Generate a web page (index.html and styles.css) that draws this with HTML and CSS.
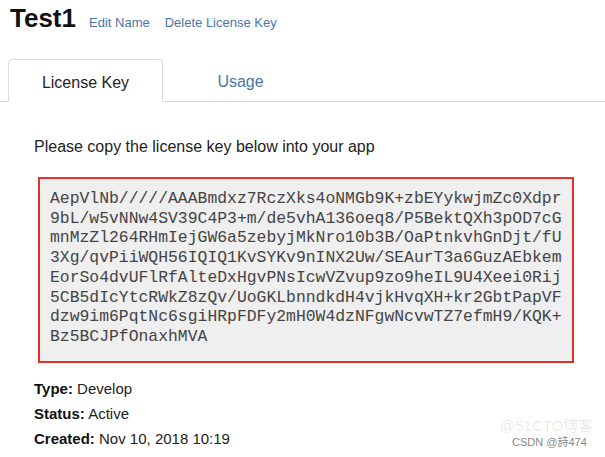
FILE: index.html
```html
<!DOCTYPE html>
<html lang="en">
<head>
  <meta charset="UTF-8">
  <title>Test1 - License Key</title>
  <link rel="stylesheet" href="styles.css">
</head>
<body>
  <div class="header">
    <h1>Test1</h1>
    <a href="#" class="action">Edit Name</a>
    <a href="#" class="action">Delete License Key</a>
  </div>

  <div class="tabs">
    <div class="tab active">License Key</div>
    <div class="tab">Usage</div>
  </div>

  <div class="panel">
    <p class="hint">Please copy the license key below into your app</p>
    <div class="key">AepVlNb/////AAABmdxz7RczXks4oNMGb9K+zbEYykwjmZc0Xdpr9bL/w5vNNw4SV39C4P3+m/de5vhA136oeq8/P5BektQXh3pOD7cGmnMzZl264RHmIejGW6a5zebyjMkNro10b3B/OaPtnkvhGnDjt/fU3Xg/qvPiiWQH56IQIQ1KvSYKv9nINX2Uw/SEAurT3a6GuzAEbkemEorSo4dvUFlRfAlteDxHgvPNsIcwVZvup9zo9heIL9U4Xeei0Rij5CB5dIcYtcRWkZ8zQv/UoGKLbnndkdH4vjkHvqXH+kr2GbtPapVFdzw9im6PqtNc6sgiHRpFDFy2mH0W4dzNFgwNcvwTZ7efmH9/KQK+Bz5BCJPfOnaxhMVA</div>

    <div class="details">
      <div><strong>Type:</strong> Develop</div>
      <div><strong>Status:</strong> Active</div>
      <div><strong>Created:</strong> Nov 10, 2018 10:19</div>
    </div>
  </div>

  <div class="watermark">
    <span class="wm-back">@51CTO博客</span>
    <span class="wm-front">CSDN @詩474</span>
  </div>
</body>
</html>
```

FILE: styles.css
```css
body {
  margin: 0;
  font-family: "Liberation Sans", Arial, sans-serif;
  color: #222;
  background-color: white;
}
.header {
  display: flex;
  align-items: baseline;
  padding: 3px 0 0 10px;
  height: 56px;
  box-sizing: border-box;
}
h1 {
  margin: 0 13px 0 0;
  font-size: 26px;
  font-weight: bold;
  color: #111;
}
.action {
  color: #4a76a8;
  text-decoration: none;
  font-size: 13px;
  margin-right: 15px;
}
.tabs {
  display: flex;
  padding-left: 8px;
  margin-top: 3px;
  border-bottom: 1px solid #dcdcdc;
}
.tab {
  width: 155px;
  height: 42px;
  padding-top: 3px;
  line-height: 40px;
  text-align: center;
  font-size: 16px;
  color: #4a76a8;
  box-sizing: border-box;
}
.tab.active {
  color: #222;
  border: 1px solid #dcdcdc;
  border-bottom-color: white;
  border-radius: 4px 4px 0 0;
  margin-bottom: -1px;
  height: 43px;
}
.panel {
  padding: 0 0 0 34px;
}
.hint {
  margin: 36px 0 0 0;
  font-size: 16px;
}
.key {
  margin: 21px 0 0 4px;
  width: 52ch;
  padding: 10px 11px 14px 10px;
  background-color: #efefef;
  border: 2px solid #e4322b;
  font-family: "Liberation Mono", "Courier New", monospace;
  font-size: 16.4px;
  line-height: 19.7px;
  color: #444;
  word-break: break-all;
}
.details {
  margin-top: 13px;
  font-size: 15px;
  line-height: 25px;
  color: #222;
}
.details strong {
  color: #111;
}
.watermark {
  position: absolute;
  left: 512px;
  top: 433px;
  font-size: 11px;
  font-family: "Liberation Sans", "Noto Sans CJK SC", sans-serif;
}
.wm-back {
  position: absolute;
  left: -12px;
  top: -19px;
  font-size: 15px;
  color: rgba(0, 0, 0, 0.1);
  white-space: nowrap;
}
.wm-front {
  position: relative;
  color: #888;
  white-space: nowrap;
}
```
